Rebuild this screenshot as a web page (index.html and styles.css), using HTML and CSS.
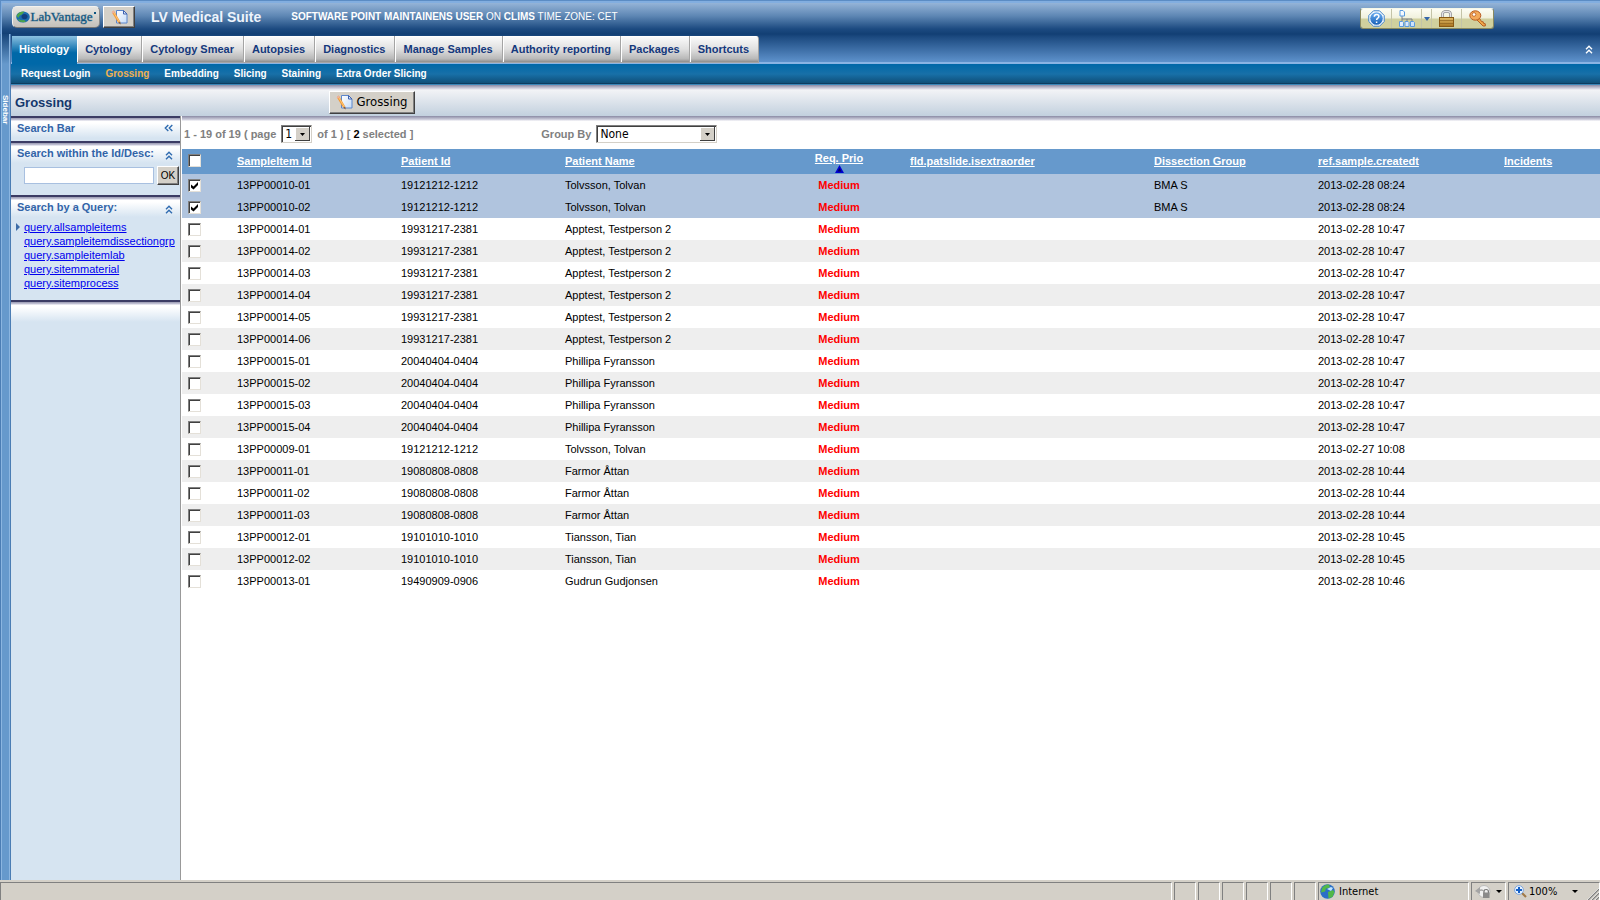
FILE: index.html
```html
<!DOCTYPE html>
<html lang="en">
<head>
<meta charset="utf-8">
<title>LV Medical Suite</title>
<link rel="stylesheet" href="styles.css">
</head>
<body>
<svg class="defs" aria-hidden="true">
  <defs>
    <linearGradient id="sheet" x1="0" y1="0" x2="1" y2="1"><stop offset="0" stop-color="#fff"/><stop offset="1" stop-color="#c6dcf8"/></linearGradient>
    <linearGradient id="brass" x1="0" y1="0" x2="0" y2="1"><stop offset="0" stop-color="#e2bd6a"/><stop offset="1" stop-color="#a87420"/></linearGradient>
    <linearGradient id="blue" x1="0" y1="0" x2="0" y2="1"><stop offset="0" stop-color="#6fb1f2"/><stop offset="1" stop-color="#1660b8"/></linearGradient>
  </defs>
  <symbol id="note" viewBox="0 0 17 17">
    <path d="M5.500 1.500h7l3.500 3.500v9h-10.500z" fill="url(#sheet)" stroke="#5b86cc"/>
    <path d="M12.500 1.500v3.500h3.500z" fill="#dbe8fb" stroke="#3f62b0"/>
    <path d="M.800 3.200l2-1.600 6.400 10.800-2 1.400z" fill="#f59a34"/>
    <path d="M2.300 2.700l6 10.300" stroke="#ffd48a" stroke-width=".8"/>
    <path d="M.800 3.200l2-1.600 1 1.600-2.100 1.500z" fill="#ecb0a0"/>
    <path d="M7.200 13.800l2-1.400.5 3.200z" fill="#8a5a38"/>
  </symbol>
  <symbol id="up" viewBox="0 0 8 9">
    <path d="M1 4.300l3-3 3 3M1 8.300l3-3 3 3" fill="none" stroke="currentColor" stroke-width="1.400"/>
  </symbol>
</svg>
<header class="top">
  <div class="brand">
    <svg viewBox="0 0 14 12" width="14" height="12" aria-hidden="true"><ellipse cx="7" cy="6" rx="6.800" ry="5.500" fill="#1a6cae"/><path d="M.500 5q2-4.500 8-4.400L6 3.500Q3 4 2.500 7zM2 9q4 3.500 8 1.500l-2-1.500q-3 1-5-1z" fill="#4fa648"/><ellipse cx="8.500" cy="5.600" rx="3" ry="2.600" fill="#0f3f80"/></svg>
    <span>LabVantage</span><i class="mark"></i>
  </div>
  <button class="raised edit" type="button" aria-label="Edit"><svg width="17" height="17"><use href="#note"/></svg></button>
  <h1>LV Medical Suite</h1>
  <p class="who"><b>SOFTWARE POINT MAINTAINENS USER</b> ON <b>CLIMS</b> TIME ZONE: CET</p>
  <div class="tools">
    <button type="button" class="t-help" aria-label="Help"><svg viewBox="0 0 17 17" width="17" height="17"><path d="M5.500.8h6l4.700 4.700v6l-4.700 4.700h-6L.8 11.500v-6z" fill="#fff" stroke="#3b7fc9"/><circle cx="8.500" cy="8.500" r="6.300" fill="url(#blue)"/><path d="M6.300 6.800q0-2.300 2.300-2.300t2.300 2q0 1-1.300 1.800-1 .7-1 1.700M8.600 11.500v1.500" fill="none" stroke="#fff" stroke-width="1.500"/></svg></button>
    <button type="button" class="t-tree" aria-label="Site map"><svg viewBox="0 0 16 17" width="16" height="17"><path d="M3 6v3h10v2M8 9v2M3 9v2" fill="none" stroke="#7a7f88"/><path d="M1 .500h3l1.500 1.500v4h-4.500zM.500 11.500h3l1 1v4h-4zM6 11.500h3l1 1v4h-4zM11.500 11.500h3l1 1v4h-4z" fill="url(#sheet)" stroke="#5b9be0"/></svg></button>
    <button type="button" class="t-drop" aria-label="More"><svg viewBox="0 0 6 4" width="6" height="4"><path d="M0 0h6L3 4z" fill="#3566a8"/></svg></button>
    <button type="button" class="t-lock" aria-label="Lock"><svg viewBox="0 0 15 17" width="15" height="17"><path d="M3.500 8V4q0-2.600 4-2.600t4 2.600v4" fill="none" stroke="#8c8c90" stroke-width="2.600"/><path d="M3.500 8V4q0-2.600 4-2.600t4 2.600v4" fill="none" stroke="#e4e4e8" stroke-width="1.200"/><rect x=".500" y="7.500" width="14" height="9" fill="url(#brass)" stroke="#8a5a14"/><path d="M1 10.500h13M1 13.500h13" stroke="#8f6420" stroke-width=".7"/></svg></button>
    <button type="button" class="t-key" aria-label="Log out"><svg viewBox="0 0 17 17" width="17" height="17"><path d="M7.500 9.500l6.500 6.500h2.300v-2.200l-1.800-.5-.3-1.500-1.700-.3-2.500-4z" fill="#f0a848" stroke="#b0561c" stroke-width=".9"/><ellipse cx="6.300" cy="5.500" rx="5.500" ry="4.700" fill="#f3a95a" stroke="#b85a20"/><circle cx="5" cy="4.500" r="1.800" fill="#fff" stroke="#b85a20" stroke-width=".8"/></svg></button>
  </div>
</header>
<div class="frame">
  <aside class="rail"><span>Sidebar</span></aside>
  <div class="page">
    <nav class="tabs" aria-label="Modules">
      <a class="on" href="#">Histology</a><a href="#">Cytology</a><a href="#">Cytology Smear</a><a href="#">Autopsies</a><a href="#">Diagnostics</a><a href="#">Manage Samples</a><a href="#">Authority reporting</a><a href="#">Packages</a><a href="#">Shortcuts</a>
      <button type="button" class="fold" aria-label="Collapse"><svg width="8" height="9"><use href="#up"/></svg></button>
    </nav>
    <nav class="subnav" aria-label="Histology">
      <a href="#">Request Login</a><a class="on" href="#">Grossing</a><a href="#">Embedding</a><a href="#">Slicing</a><a href="#">Staining</a><a href="#">Extra Order Slicing</a>
    </nav>
    <div class="titlebar">
      <h2>Grossing</h2>
      <button class="raised action" type="button"><svg width="17" height="17"><use href="#note"/></svg>Grossing</button>
    </div>
    <div class="work">
      <aside class="side">
        <section class="panel bar"><h3>Search Bar <svg viewBox="0 0 9 8" width="9" height="8"><path d="M4.300 1l-3 3 3 3M8.300 1l-3 3 3 3" fill="none" stroke="#2f6bb0" stroke-width="1.400"/></svg></h3></section>
        <section class="panel find">
          <h3><label for="q">Search within the Id/Desc:</label> <svg width="8" height="9"><use href="#up"/></svg></h3>
          <form class="search"><input id="q" type="text"><button class="raised ok" type="button">OK</button></form>
        </section>
        <section class="panel queries">
          <h3>Search by a Query: <svg width="8" height="9"><use href="#up"/></svg></h3>
          <ul>
            <li class="current"><a href="#">query.allsampleitems</a></li>
            <li><a href="#">query.sampleitemdissectiongrp</a></li>
            <li><a href="#">query.sampleitemlab</a></li>
            <li><a href="#">query.sitemmaterial</a></li>
            <li><a href="#">query.sitemprocess</a></li>
          </ul>
        </section>
        <section class="panel rest"></section>
      </aside>
      <main class="list">
        <div class="pager">
          <label class="pages">1 - 19 of 19 ( page <select class="num"><option>1</option></select></label>
          <span class="count">of 1 ) [ <b>2</b> selected ]</span>
          <label class="group">Group By <select class="by"><option>None</option></select></label>
        </div>
        <table>
          <colgroup><col class="c-check"><col class="c-mid"><col class="c-mid"><col class="c-name"><col class="c-prio"><col class="c-extra"><col class="c-mid"><col class="c-date"><col class="c-inc"></colgroup>
          <thead><tr><th><input type="checkbox" aria-label="Select all"></th><th><a href="#">SampleItem Id</a></th><th><a href="#">Patient Id</a></th><th><a href="#">Patient Name</a></th><th class="prio"><a href="#">Req. Prio</a><svg viewBox="0 0 9 8" width="9" height="8"><path d="M4.500 0L9 8H0z" fill="#0000d0"/><path d="M4.500 3L6.500 6.500h-4z" fill="#000060"/></svg></th><th><a href="#">fld.patslide.isextraorder</a></th><th><a href="#">Dissection Group</a></th><th><a href="#">ref.sample.createdt</a></th><th><a href="#">Incidents</a></th></tr></thead>
          <tbody id="rows"></tbody>
        </table>
      </main>
    </div>
  </div>
</div>
<footer class="status">
  <span class="cell wide"></span><span class="cell"></span><span class="cell"></span><span class="cell"></span><span class="cell"></span><span class="cell"></span><span class="cell"></span>
  <span class="cell zone"><svg viewBox="0 0 15 15" width="15" height="15"><circle cx="7.500" cy="7.500" r="7.300" fill="#2b6fc6"/><path d="M2 4q3-4 7-3.500l1 3-4 1-1 3-4 1zM8 8l5-2 1.500 2-2 5-4 1.500z" fill="#52b848"/><path d="M7 5l4-2 2 1-2 3z" fill="#bfe4ff"/></svg>Internet</span>
  <span class="cell lock"><svg viewBox="0 0 16 14" width="16" height="14"><circle cx="9" cy="6.500" r="6" fill="#f0f0f0" stroke="#bbb"/><path d="M0 6l5-4v2.500q3-1 4 2-2-1-4-.5V9z" fill="#a4a4a4"/><path d="M9 8V6.500q0-2 2.200-2t2.200 2V8" fill="none" stroke="#777" stroke-width="1.200"/><rect x="8" y="7.500" width="6.500" height="5.500" fill="#8a8a8a"/></svg><i class="arrow"></i></span>
  <span class="cell zoom"><svg viewBox="0 0 13 13" width="13" height="13"><path d="M8 8l4 4" stroke="#a07a48" stroke-width="2.200"/><circle cx="5" cy="5" r="4.400" fill="#e6f2ff" stroke="#7fa6dc"/><path d="M5 2v6M2 5h6" stroke="#1560c8" stroke-width="2"/></svg>100%<i class="arrow"></i><svg class="grip" viewBox="0 0 12 12" width="12" height="12"><path d="M1 12L12 1M5 12l7-7M9 12l3-3" stroke="#808080" stroke-width="1.400"/><path d="M0 12L12 0M4 12l8-8M8 12l4-4" stroke="#fff" stroke-width=".6"/></svg></span>
</footer>
<script src="rows.js"></script>
</body>
</html>
```
FILE: styles.css
```css
* { box-sizing: border-box; }
html, body { height: 100%; }
body {
  margin: 0;
  display: flex;
  flex-direction: column;
  background: #fff;
  color: #000;
  font: 11px/14px "Liberation Sans", Arial, sans-serif;
}
h1, h2, h3, p, ul { margin: 0; padding: 0; }
button, input, select { font: inherit; margin: 0; }
svg { display: block; flex: none; }
.defs { position: absolute; width: 0; height: 0; }

.raised {
  display: flex;
  align-items: center;
  justify-content: center;
  padding: 0;
  background: #d4d0c8;
  border: 1px solid;
  border-color: #fff #404040 #404040 #fff;
  box-shadow: inset -1px -1px 0 #808080;
}

.top {
  display: flex;
  align-items: center;
  height: 34px;
  padding: 1px 0 2px 9px;
  border: solid #5b8cc4;
  border-width: 1px 0 0 1px;
  box-shadow: inset 1px 2px 0 #82aee0;
  background: linear-gradient(#9dbbdd, #5e87b4 45%, #1c4a80 85%, #123f74);
}
.brand {
  display: flex;
  align-items: center;
  justify-content: center;
  width: 88px;
  height: 22px;
  margin-left: 2px;
  border: 1px solid #f4f2ee;
  border-right-color: #8a8a8a;
  border-bottom-color: #777;
  border-radius: 5px;
  background: linear-gradient(#e8e6e2, #c4c0ba);
  color: #0d5580;
  font: 13px/18px "Liberation Serif", serif;
  -webkit-text-stroke: 1px #0d558060;
}
.mark { width: 2px; height: 2px; margin: -9px 0 0 1px; background: #0d5580; }
.edit { width: 32px; height: 22px; margin-left: 3px; }
.top h1 { margin-left: 16px; color: #eef4fc; font-size: 14px; line-height: 18px; }
.who { margin-left: 30px; color: #fff; font-size: 10px; }
.who b { font-weight: 900; }
.tools {
  display: flex;
  height: 21px;
  margin: 3px 106px 0 auto;
  border: 1px solid #8a8a60;
  border-top-color: #f8f8e8;
  border-radius: 3px;
  overflow: hidden;
}
.tools button {
  display: flex;
  align-items: center;
  justify-content: center;
  padding: 0;
  border: 0;
  border-right: 1px solid #c4c4a8;
  background: linear-gradient(#fdfdf4, #f0f0dc 48%, #d0d09e 52%, #d0d09e);
}
.tools button:last-child { border-right: 0; }
.tools .t-help { width: 31px; }
.tools .t-tree, .tools .t-lock { width: 30px; }
.tools .t-drop { width: 10px; }
.tools .t-key { width: 31px; }

.frame { display: flex; flex: 1; }
.rail {
  width: 11px;
  padding-top: 61px;
  border: solid #4b7db4;
  border-width: 0 1px;
  background: linear-gradient(#164479, #6699cc 30px, #6699cc);
  box-shadow: inset 1px 0 0 #8bb5e0, inset -1px 0 0 #8bb5e0;
  color: #fff;
  font-size: 8px;
  font-weight: bold;
  line-height: 8px;
}
.rail span { display: block; writing-mode: vertical-rl; }
.page { display: flex; flex: 1; flex-direction: column; min-width: 0; }

.tabs {
  display: flex;
  height: 30px;
  padding: 2px 0 1px 1px;
  background: linear-gradient(#123f74, #1c4a80 3px, #5e92cc 28px, #8ab4e4 28px);
}
.tabs a {
  padding: 5px 9px 0 8px;
  border: solid #a4a4a4;
  border-width: 0 1px 1px 0;
  background: linear-gradient(#fcfcfc, #e0e0e0 50%, #b8b8b8 88%, #8c8c8c);
  color: #14387c;
  font-weight: bold;
  line-height: 16px;
  text-decoration: none;
  box-shadow: inset 1px 1px 0 #fff;
}
.tabs a.on { margin-bottom: -1px; padding: 5px 8px 0 7px; border: 0; background: linear-gradient(#8cc0e0, #0068a8 60%); color: #fff; box-shadow: none; }
.tabs a:nth-of-type(9) { border-radius: 0 3px 0 0; }
.fold { margin: 0 7px 0 auto; padding: 0; border: 0; background: none; color: #fff; }

.subnav {
  display: flex;
  gap: 15px;
  height: 21px;
  padding: 2px 10px 0;
  border-bottom: 1px solid #3a86b8;
  background: linear-gradient(#0068a8, #1870a8 50%, #0e4c74);
  box-shadow: inset 0 -1px 0 #0c3c60;
}
.subnav a { color: #fff; font-size: 10px; font-weight: bold; line-height: 16px; text-decoration: none; }
.subnav a.on { color: #f0b050; }

.titlebar {
  display: flex;
  align-items: center;
  height: 31px;
  padding: 3px 0 0 4px;
  background: linear-gradient(#8a8aa4, #c8c8d8 3px, #f2f3f6 5px, #c2d0de);
}
.titlebar h2 { width: 314px; color: #14386c; font-size: 13px; line-height: 14px; padding-top: 2px; }
.action { gap: 3px; width: 86px; height: 23px; font: 13px/16px "DejaVu Sans Condensed", sans-serif; }

.work { display: flex; flex: 1; }
.side { display: flex; flex-direction: column; width: 170px; border-right: 1px solid #999; }
.panel {
  padding: 5px 7px 0 6px;
  background: linear-gradient(#3c3c64 2px, #9898b0 2px, #c8c8da 4px, #fff 5px, #fff 7px, #d6e4f1 22px);
}
.panel h3 { display: flex; align-items: center; justify-content: space-between; color: #3264a8; font-size: 11px; line-height: 14px; }
.panel h3 svg { color: #2f6bb0; }
.find h3 svg, .queries h3 svg { margin-top: 4px; }
.bar { height: 25px; }
.find { height: 54px; }
.queries { height: 105px; }
.rest { flex: 1; }
.search { display: flex; gap: 3px; margin: 6px -7px 0 7px; }
.search input { flex: 1; min-width: 0; height: 17px; margin-top: 1px; border: 1px solid #a8c0e0; background: #fff; }
.ok { width: 22px; height: 19px; margin-right: 1px; font-size: 10px; }
.queries ul { margin-top: 6px; list-style: none; }
.queries li { padding-left: 7px; white-space: nowrap; }
.queries a { color: #0000ee; text-decoration: underline; }
.current { position: relative; }
.current::before { content: ""; position: absolute; left: -1px; top: 3px; border: solid transparent; border-width: 4px 0 4px 4px; border-left-color: #3c6ca8; }

.list { flex: 1; min-width: 0; padding-left: 1px; }
.pager {
  display: flex;
  align-items: center;
  height: 33px;
  padding: 3px 0 0 2px;
  background: linear-gradient(#8a8aa4, #d8d8e4 4px, #fff 5px);
  color: #808080;
  font-weight: bold;
}
.pager label { display: flex; align-items: center; gap: 5px; }
.pager b { color: #000; }
.count { margin-left: 5px; }
.group { margin-left: 128px; }
select {
  appearance: none;
  height: 18px;
  padding: 0 3px;
  border: 1px solid;
  border-color: #808080 #d4d0c8 #d4d0c8 #808080;
  border-radius: 0;
  box-shadow: inset 1px 1px 0 #404040;
  color: #000;
  background: #fff url("data:image/svg+xml,%3Csvg xmlns='http://www.w3.org/2000/svg' width='15' height='14'%3E%3Cpath d='M0 0h15v14H0z' fill='%23404040'/%3E%3Cpath d='M0 0h14v13H0z' fill='%23fff'/%3E%3Cpath d='M1 1h13v12H1z' fill='%23d4d0c8'/%3E%3Cpath d='M5 6h5L7.500 9z'/%3E%3C/svg%3E") no-repeat right 1px center;
}
.pager select { font: 12px/14px "DejaVu Sans Condensed", sans-serif; }
.num { width: 31px; }
.by { width: 121px; }

table { width: 100%; border-collapse: collapse; table-layout: fixed; }
.c-check { width: 51px; }
.c-mid { width: 164px; }
.c-name { width: 211px; }
.c-prio { width: 134px; }
.c-extra { width: 244px; }
.c-date { width: 186px; }
.c-inc { width: 100px; }
th, td { padding: 0 0 0 4px; text-align: left; white-space: nowrap; }
th { height: 25px; padding-bottom: 2px; background: #6699cc; }
th a { color: #fff; text-decoration: underline; }
td { height: 22px; }
tbody tr:nth-child(even) { background: #eee; }
tbody tr.picked { background: #b0c4de; }
.prio { padding: 0; color: #f00; font-weight: bold; text-align: center; }
th.prio svg { margin: 0 auto; }
td:first-child, th:first-child { padding-left: 6px; }
input[type="checkbox"] {
  appearance: none;
  display: block;
  width: 13px;
  height: 13px;
  border: 1px solid;
  border-color: #808080 #e4e0d8 #e4e0d8 #808080;
  box-shadow: inset 1px 1px 0 #404040;
  background: #fff;
}
input[type="checkbox"]:checked {
  background: #fff url("data:image/svg+xml,%3Csvg xmlns='http://www.w3.org/2000/svg' width='9' height='9'%3E%3Cpath d='M1 3.500v3l2.500 2L8 4V1L3.500 5.500z'/%3E%3C/svg%3E") no-repeat center;
}

.status {
  display: flex;
  gap: 2px;
  height: 20px;
  padding-top: 2px;
  background: #d4d0c8;
  font: 11px/14px "DejaVu Sans Condensed", sans-serif;
}
.cell { display: flex; align-items: center; width: 22px; border: solid; border-width: 1px 1px 0; border-color: #808080 #fff #fff #808080; }
.wide { flex: 1; }
.zone { width: 151px; gap: 4px; padding-left: 1px; }
.lock { width: 35px; gap: 5px; padding-left: 3px; }
.zoom { width: 92px; gap: 2px; padding-left: 5px; }
.arrow { border: solid transparent; border-width: 3px 3px 0; border-top-color: #000; }
.zoom .arrow { margin-left: 13px; }
.grip { margin-left: auto; align-self: flex-end; }
```
FILE: rows.js
```js
const samples = [
  ["13PP00010-01", "19121212-1212", "Tolvsson, Tolvan", "BMA S", "2013-02-28 08:24", true],
  ["13PP00010-02", "19121212-1212", "Tolvsson, Tolvan", "BMA S", "2013-02-28 08:24", true],
  ["13PP00014-01", "19931217-2381", "Apptest, Testperson 2", "", "2013-02-28 10:47"],
  ["13PP00014-02", "19931217-2381", "Apptest, Testperson 2", "", "2013-02-28 10:47"],
  ["13PP00014-03", "19931217-2381", "Apptest, Testperson 2", "", "2013-02-28 10:47"],
  ["13PP00014-04", "19931217-2381", "Apptest, Testperson 2", "", "2013-02-28 10:47"],
  ["13PP00014-05", "19931217-2381", "Apptest, Testperson 2", "", "2013-02-28 10:47"],
  ["13PP00014-06", "19931217-2381", "Apptest, Testperson 2", "", "2013-02-28 10:47"],
  ["13PP00015-01", "20040404-0404", "Phillipa Fyransson", "", "2013-02-28 10:47"],
  ["13PP00015-02", "20040404-0404", "Phillipa Fyransson", "", "2013-02-28 10:47"],
  ["13PP00015-03", "20040404-0404", "Phillipa Fyransson", "", "2013-02-28 10:47"],
  ["13PP00015-04", "20040404-0404", "Phillipa Fyransson", "", "2013-02-28 10:47"],
  ["13PP00009-01", "19121212-1212", "Tolvsson, Tolvan", "", "2013-02-27 10:08"],
  ["13PP00011-01", "19080808-0808", "Farmor Åttan", "", "2013-02-28 10:44"],
  ["13PP00011-02", "19080808-0808", "Farmor Åttan", "", "2013-02-28 10:44"],
  ["13PP00011-03", "19080808-0808", "Farmor Åttan", "", "2013-02-28 10:44"],
  ["13PP00012-01", "19101010-1010", "Tiansson, Tian", "", "2013-02-28 10:45"],
  ["13PP00012-02", "19101010-1010", "Tiansson, Tian", "", "2013-02-28 10:45"],
  ["13PP00013-01", "19490909-0906", "Gudrun Gudjonsen", "", "2013-02-28 10:46"]
];
document.getElementById("rows").innerHTML = samples.map(([id, patient, name, group, date, picked]) =>
  `<tr${picked ? ' class="picked"' : ""}><td><input type="checkbox" aria-label="Select ${id}"${picked ? " checked" : ""}></td><td>${id}</td><td>${patient}</td><td>${name}</td><td class="prio">Medium</td><td></td><td>${group}</td><td>${date}</td><td></td></tr>`
).join("");
```
